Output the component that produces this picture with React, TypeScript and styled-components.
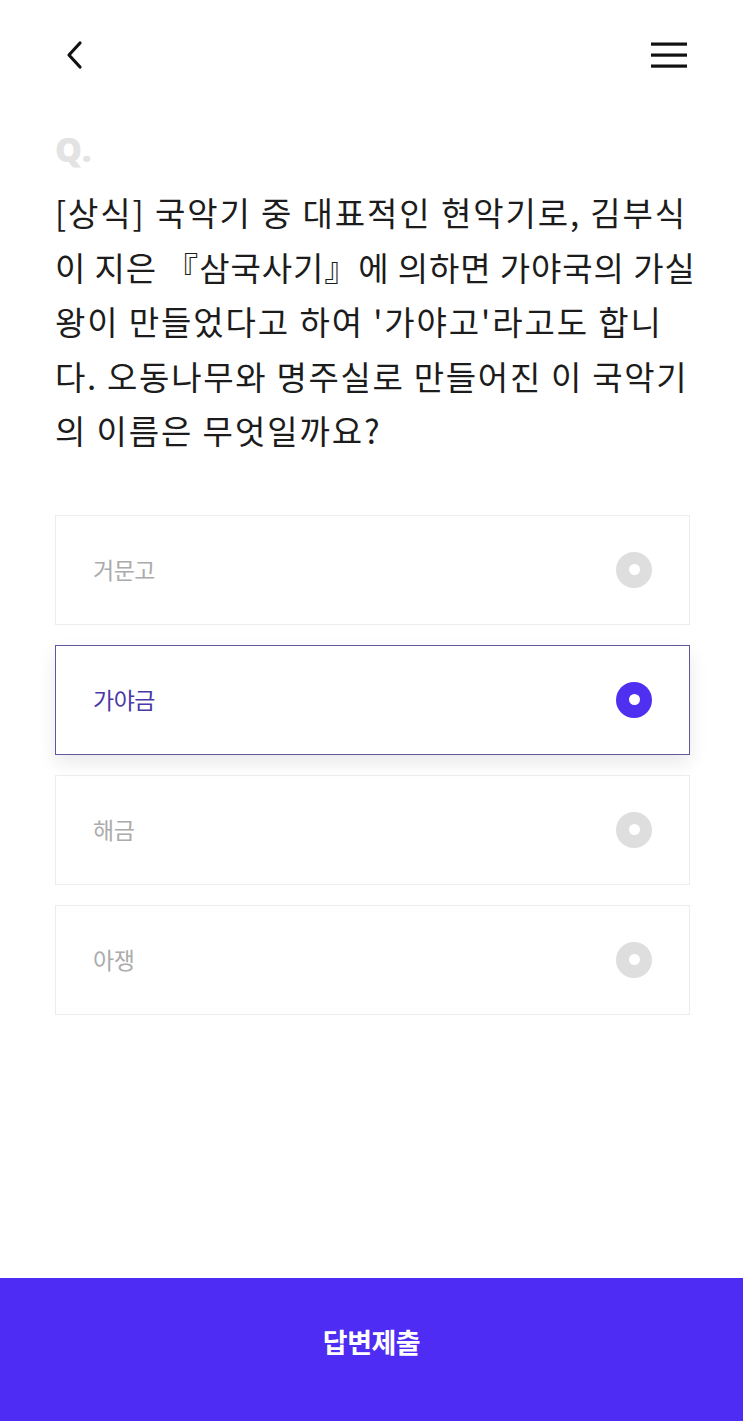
import React, { useState } from "react";
import styled, { createGlobalStyle } from "styled-components";

const GlobalStyle = createGlobalStyle`
  html, body {
    margin: 0;
    padding: 0;
    background: #ffffff;
  }

  body {
    font-family: "Noto Sans CJK KR", "Noto Sans", sans-serif;
  }
`;

const Page = styled.div`
  width: 743px;
  height: 1421px;
  display: flex;
  flex-direction: column;
  background: #ffffff;
  overflow: hidden;
`;

const Header = styled.header`
  height: 110px;
  padding: 0 55px 0 62px;
  display: flex;
  align-items: flex-start;
  justify-content: space-between;

  button {
    border: none;
    background: none;
    padding: 0;
    cursor: pointer;
    display: flex;
  }
`;

const BackButton = styled.button`
  margin-top: 38px;
`;

const MenuButton = styled.button`
  margin-top: 38px;
`;

const Content = styled.main`
  flex: 1;
  padding: 22px 53px 0 55px;
`;

const QMark = styled.div`
  font-family: "Noto Sans", sans-serif;
  font-size: 34px;
  font-weight: 900;
  line-height: 1;
  color: #e3e3e3;
  letter-spacing: 1px;
  margin-bottom: 19px;
`;

const Question = styled.p`
  margin: 0 0 57px;
  font-size: 33px;
  line-height: 54.5px;
  color: #1c1c1c;
  white-space: nowrap;
`;

const QuestionLine = styled.span<{ $spacing: number }>`
  display: block;
  letter-spacing: ${(p) => p.$spacing}px;
`;

const OptionList = styled.ul`
  list-style: none;
  margin: 0;
  padding: 0;
  display: flex;
  flex-direction: column;
  gap: 20px;
`;

const Option = styled.li<{ $selected: boolean }>`
  height: 110px;
  box-sizing: border-box;
  padding: 0 37px 0 37px;
  display: flex;
  align-items: center;
  justify-content: space-between;
  border: 1px solid ${(p) => (p.$selected ? "#64559f" : "#ececec")};
  box-shadow: ${(p) =>
    p.$selected ? "0 8px 18px rgba(0, 0, 0, 0.09)" : "none"};
  cursor: pointer;
`;

const OptionLabel = styled.span<{ $selected: boolean }>`
  font-size: 23px;
  letter-spacing: -0.5px;
  padding-bottom: 2px;
  color: ${(p) => (p.$selected ? "#4a38a8" : "#ababab")};
`;

const Radio = styled.span<{ $selected: boolean }>`
  width: 36px;
  height: 36px;
  border-radius: 50%;
  background: ${(p) => (p.$selected ? "#4f2ff0" : "#dedede")};
  display: flex;
  align-items: center;
  justify-content: center;

  &::after {
    content: "";
    width: 11px;
    height: 11px;
    border-radius: 50%;
    background: #ffffff;
  }
`;

const SubmitButton = styled.button`
  height: 143px;
  width: 100%;
  border: none;
  background: #4f2cf3;
  color: #ffffff;
  font-family: "Noto Sans CJK KR", sans-serif;
  font-size: 27px;
  font-weight: 700;
  letter-spacing: -0.5px;
  padding-bottom: 18px;
  cursor: pointer;
`;

const questionLines = [
  { text: "[상식] 국악기 중 대표적인 현악기로, 김부식", spacing: 1.9 },
  { text: "이 지은 『삼국사기』에 의하면 가야국의 가실", spacing: 0.9 },
  { text: "왕이 만들었다고 하여 '가야고'라고도 합니", spacing: 1.9 },
  { text: "다. 오동나무와 명주실로 만들어진 이 국악기", spacing: 1.7 },
  { text: "의 이름은 무엇일까요?", spacing: 1.9 },
];

const options = ["거문고", "가야금", "해금", "아쟁"];

const App = () => {
  const [selected, setSelected] = useState(1);

  return (
    <>
      <GlobalStyle />
      <Page>
        <Header>
          <BackButton aria-label="뒤로">
            <svg width="26" height="34" viewBox="0 0 26 34">
              <path
                d="M18 5 L7 17 L18 29"
                fill="none"
                stroke="#111"
                strokeWidth="3.2"
                strokeLinecap="round"
                strokeLinejoin="round"
              />
            </svg>
          </BackButton>
          <MenuButton aria-label="메뉴">
            <svg width="38" height="32" viewBox="0 0 38 32">
              <rect x="1" y="4.5" width="36" height="3.2" fill="#111" />
              <rect x="1" y="15.5" width="36" height="3.2" fill="#111" />
              <rect x="1" y="26.5" width="36" height="3.2" fill="#111" />
            </svg>
          </MenuButton>
        </Header>

        <Content>
          <QMark>Q.</QMark>
          <Question>
            {questionLines.map((line) => (
              <QuestionLine key={line.text} $spacing={line.spacing}>
                {line.text}
              </QuestionLine>
            ))}
          </Question>

          <OptionList>
            {options.map((opt, i) => (
              <Option
                key={opt}
                $selected={selected === i}
                onClick={() => setSelected(i)}
              >
                <OptionLabel $selected={selected === i}>{opt}</OptionLabel>
                <Radio $selected={selected === i} />
              </Option>
            ))}
          </OptionList>
        </Content>

        <SubmitButton>답변제출</SubmitButton>
      </Page>
    </>
  );
};

export default App;
